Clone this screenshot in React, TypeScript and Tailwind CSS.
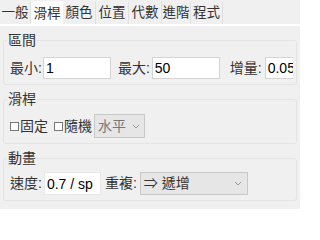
import React from 'react';

const tabs = [
  { label: '一般', w: 'w-[31px]' },
  { label: '滑桿', w: 'w-[32px]' },
  { label: '顏色', w: 'w-[33px]' },
  { label: '位置', w: 'w-[33px]' },
  { label: '代數', w: 'w-[33px]' },
  { label: '進階', w: 'w-[29px]' },
  { label: '程式', w: 'w-[32px]' },
];

const Chevron = () => (
  <svg width="8" height="5" viewBox="0 0 8 5" className="shrink-0">
    <path d="M1 1l3 3 3-3" fill="none" stroke="#999" strokeWidth="1" />
  </svg>
);

const Section = ({ title, children }: { title: string; children: React.ReactNode }) => (
  <fieldset className="mx-[3px] min-w-0 rounded-[3px] border border-[#e4e4e4] pl-[3px] pr-[3px]">
    <legend className="px-[1px] leading-[15px]">{title}</legend>
    {children}
  </fieldset>
);

const Label = ({ children, className = '' }: { children: React.ReactNode; className?: string }) => (
  <span className={`shrink-0 whitespace-nowrap ${className}`}>{children}</span>
);

const inputCls = 'shrink-0 h-[22px] bg-white border border-[#d4d4d4] px-[2px] text-[14px] text-black outline-none';

export default function App() {
  return (
    <div className="w-[300px] h-[209px] overflow-hidden bg-[#f0f0f0] text-[14px] text-[#333] font-['Liberation_Sans','Noto_Sans_CJK_TC',sans-serif]">
      <div className="flex h-[26px] items-end border-b-[2px] border-white text-[13.5px]">
        {tabs.map((t, i) =>
          i === 1 ? (
            <div key={t.label} className={`${t.w} shrink-0 h-[25px] -mb-[2px] bg-white flex items-center justify-center leading-none whitespace-nowrap`}>
              {t.label}
            </div>
          ) : (
            <div key={t.label} className={`${t.w} shrink-0 h-[22px] border-r border-[#e0e0e0] bg-[#f0f0f0] flex items-center justify-center leading-none whitespace-nowrap`}>
              {t.label}
            </div>
          )
        )}
      </div>

      <div className="flex flex-col gap-[7px] pt-[7px]">
        <Section title="區間">
          <div className="flex items-center overflow-hidden pl-[3px] pt-[9px] pb-[5px]">
            <Label>最小:</Label>
            <input readOnly value="1" className={`ml-[1px] w-[68px] ${inputCls}`} />
            <Label className="ml-[7px]">最大:</Label>
            <input readOnly value="50" className={`ml-[2px] w-[68px] ${inputCls}`} />
            <Label className="ml-[10px]">增量:</Label>
            <input readOnly value="0.05" className={`ml-[3px] w-[60px] ${inputCls}`} />
          </div>
        </Section>

        <Section title="滑桿">
          <div className="flex items-center overflow-hidden pl-[3px] pt-[7px] pb-[5px]">
            <label className="flex items-center shrink-0 whitespace-nowrap">
              <span className="w-[9px] h-[9px] border border-[#777] bg-white mr-[1px]" />
              固定
            </label>
            <label className="flex items-center shrink-0 whitespace-nowrap ml-[6px]">
              <span className="w-[9px] h-[9px] border border-[#777] bg-white mr-[1px]" />
              隨機
            </label>
            <div className="ml-[2px] shrink-0 w-[51px] h-[24px] bg-[#e6e6e6] border border-[#c8c8c8] flex items-center justify-between pl-[3px] pr-[4px] text-[#777] whitespace-nowrap">
              <span>水平</span>
              <Chevron />
            </div>
          </div>
        </Section>

        <Section title="動畫">
          <div className="flex items-center overflow-hidden pl-[3px] pt-[6px] pb-[5px]">
            <Label>速度:</Label>
            <input readOnly value="0.7 / sp" className={`ml-[2px] w-[57px] ${inputCls} h-[23px] border-[#e8e8e8]`} />
            <Label className="ml-[4px]">重複:</Label>
            <div className="ml-[3px] shrink-0 w-[108px] h-[23px] bg-[#e6e6e6] border border-[#c8c8c8] flex items-center justify-between pl-[3px] pr-[5px] whitespace-nowrap">
              <span>⇒ 遞增</span>
              <Chevron />
            </div>
          </div>
        </Section>
      </div>
    </div>
  );
}
